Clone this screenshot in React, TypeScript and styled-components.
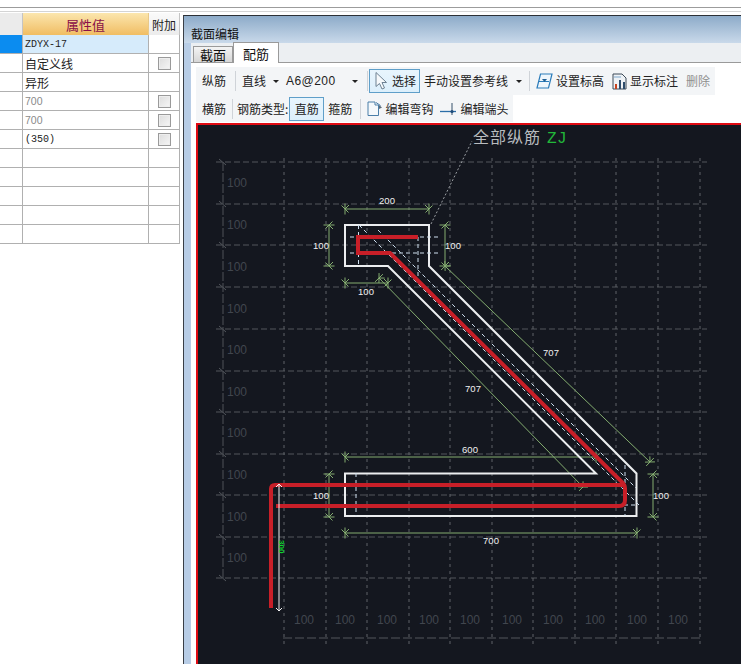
import React from "react";
import styled, { createGlobalStyle } from "styled-components";

const CJK = `"Noto Sans CJK SC", "Liberation Sans", sans-serif`;

const Global = createGlobalStyle`
  html, body { margin: 0; padding: 0; background: #fff; overflow: hidden; }
  #root { width: 741px; height: 664px; }
`;

const Page = styled.div`
  width: 741px; height: 664px; overflow: hidden; display: flex; flex-direction: column;
  background: #fff; font-family: ${CJK}; font-size: 12px; color: #222;
`;
const TopRule = styled.div`
  margin-top: 7px; height: 6px; flex: none; box-sizing: border-box;
  border-top: 1px solid #9c9c9c;
  &::after { content: ""; display: block; margin-top: 3px; height: 1px; background: #d4d4d4; }
`;
const Main = styled.div`
  flex: 1; min-height: 0; display: flex; gap: 3px;
`;
const PropTable = styled.div`
  width: 180px; flex: none; align-self: flex-start;
  display: grid; grid-template-columns: 23px 126px 31px; grid-template-rows: 22px; grid-auto-rows: 19px;
`;
const HeadCell = styled.div<{ $kind: "blank" | "main" | "extra" }>`
  box-sizing: border-box; display: flex; align-items: center; justify-content: center;
  border-right: 1px solid ${p => (p.$kind === "main" ? "#e8c98a" : "#c4c4c4")};
  background: ${p =>
    p.$kind === "main"
      ? "linear-gradient(#fbe6ae, #f0bd63)"
      : p.$kind === "extra"
      ? "linear-gradient(#fafafa, #ececec)"
      : "#ebebeb"};
  color: ${p => (p.$kind === "main" ? "#8a1048" : "#222")};
  font-size: ${p => (p.$kind === "main" ? "13px" : "12px")};
`;
const Cell = styled.div<{ $bg?: string; $tone?: "mono" | "muted" | "plain" }>`
  box-sizing: border-box; height: 19px; display: flex; align-items: center; justify-content: flex-start;
  padding-left: 2px; overflow: hidden; white-space: nowrap;
  border-right: 1px solid #b0b0b0; border-bottom: 1px solid #b0b0b0;
  background: ${p => p.$bg ?? "#fff"};
  color: ${p => (p.$tone === "muted" ? "#8a8a8a" : "#222")};
  font-family: ${p => (p.$tone === "mono" ? `"Liberation Mono", monospace` : p.$tone === "muted" ? `"Liberation Sans", sans-serif` : CJK)};
  font-size: ${p => (p.$tone === "mono" ? "10px" : p.$tone === "muted" ? "10.500px" : "12px")};
`;
const CheckCell = styled(Cell)`
  justify-content: center; padding-left: 0;
`;
const Check = styled.span`
  width: 13px; height: 13px; box-sizing: border-box; display: block;
  border: 1px solid #9a9a9a; background: linear-gradient(135deg, #dcdcdc, #f6f6f6);
  box-shadow: inset 0 0 0 1px #eee;
`;
const Panel = styled.div`
  flex: 1; min-width: 0; margin-top: 2px; display: flex; flex-direction: column;
  border-left: 1px solid #3a3f46; border-top: 1px solid #2c3036;
  background: #b8cde6; overflow: hidden;
`;
const TitleBar = styled.div`
  height: 27px; flex: none; box-sizing: border-box; padding: 9px 0 0 7px; line-height: 17px; color: #111;
  background: linear-gradient(#8dabc9, #c9d9ea);
`;
const PanelBody = styled.div`
  flex: 1; min-height: 0; margin-left: 7px; display: flex; flex-direction: column; background: #fff;
`;
const TabStrip = styled.div`
  height: 20px; flex: none; box-sizing: border-box; display: flex; align-items: flex-end; padding-left: 2px;
  background: #eceff2; border-bottom: 1px solid #9a9a9a;
`;
const Tab = styled.div<{ $active?: boolean }>`
  box-sizing: border-box; display: flex; justify-content: center; align-items: center;
  width: ${p => (p.$active ? "46px" : "40px")};
  height: ${p => (p.$active ? "21px" : "17px")};
  margin-bottom: -1px;
  border: 1px solid #9a9a9a; border-bottom: ${p => (p.$active ? "none" : "1px solid #9a9a9a")};
  background: ${p => (p.$active ? "#fff" : "linear-gradient(#f4f4f4, #d6d6d6)")};
  font-size: 13px; color: #111;
`;
const Content = styled.div`
  flex: 1; min-height: 0; display: flex; flex-direction: column; padding: 4px 0 0 5px;
  background: #fff;
`;
const Toolbar = styled.div<{ $h: number }>`
  height: ${p => p.$h}px; flex: none; align-self: flex-start; display: flex; align-items: center;
  padding: 0 5px 0 6px; background: #f3f5f7; white-space: nowrap;
`;
const Label = styled.span<{ $ml?: number; $muted?: boolean }>`
  margin-left: ${p => p.$ml ?? 0}px; color: ${p => (p.$muted ? "#8f8f8f" : "#222")}; line-height: 16px;
`;
const Combo = styled.span<{ $ml: number }>`
  margin-left: ${p => p.$ml}px; width: 49px; font-family: "Liberation Sans", sans-serif; letter-spacing: 0.45px; color: #222;
`;
const Caret = styled.span<{ $ml: number }>`
  margin-left: ${p => p.$ml}px; width: 0; height: 0;
  border-left: 3px solid transparent; border-right: 3px solid transparent; border-top: 3px solid #222;
`;
const Sep = styled.span<{ $ml: number }>`
  margin-left: ${p => p.$ml}px; width: 1px; height: 20px; background: #cfd3d8;
`;
const ToolButton = styled.div<{ $ml: number; $w: number }>`
  margin-left: ${p => p.$ml}px; width: ${p => p.$w}px; height: 24px; box-sizing: border-box; flex: none;
  display: flex; align-items: center; justify-content: center; gap: 3px;
  border: 1px solid #5f9fc9; background: linear-gradient(#e8f5fd, #dceffb);
`;
const IconSlot = styled.svg<{ $ml: number }>`
  margin-left: ${p => p.$ml}px; flex: none; display: block;
`;
const Canvas = styled.div`
  flex: 1; min-height: 0; margin-top: 1px; border: solid #e00a12; border-width: 2px 0 0 2px; background: #14171f;
  overflow: hidden;
`;
const Drawing = styled.svg`
  display: block; width: 543px; height: 539px;
`;
const GridLabel = styled.text`
  font-family: "Liberation Sans", sans-serif; font-size: 12px; fill: #41464e; text-anchor: middle;
`;
const DimText = styled.text`
  font-family: "Liberation Sans", sans-serif; font-size: 9.500px; fill: #f0f0f0; text-anchor: middle;
`;
const NoteText = styled.text`
  font-family: ${CJK}; font-size: 16px; fill: #b9bcbf; letter-spacing: 1px;
`;
const NoteCode = styled.text`
  font-family: "Liberation Mono", monospace; font-size: 16px; fill: #22b83a; letter-spacing: 0.500px;
`;
const HeightText = styled.text`
  font-family: "Liberation Sans", sans-serif; font-size: 8px; font-weight: bold; fill: #0fd02c;
`;

const rows: { v: string; tone?: "mono" | "muted" | "plain"; check?: boolean; sel?: boolean }[] = [
  { v: "ZDYX-17", tone: "mono", sel: true },
  { v: "自定义线", check: true },
  { v: "异形" },
  { v: "700", tone: "muted", check: true },
  { v: "700", tone: "muted", check: true },
  { v: "(350)", tone: "mono", check: true },
  { v: "" }, { v: "" }, { v: "" }, { v: "" }, { v: "" },
];

const xs = [284, 326, 367, 409, 450, 492, 533, 575, 616, 658, 700];
const ys = [162, 204, 245, 287, 329, 371, 412, 454, 495, 537, 578];
const leftLabels = [183, 225, 267, 309, 350, 392, 433, 475, 517, 558];
const bottomLabels = [304, 345, 387, 429, 470, 512, 553, 595, 637, 678];

const GREEN = "#84ad70";

function Dim({ x1, y1, x2, y2 }: { x1: number; y1: number; x2: number; y2: number }) {
  const len = Math.hypot(x2 - x1, y2 - y1);
  const dx = (x2 - x1) / len, dy = (y2 - y1) / len;
  const end = (px: number, py: number, s: number) => {
    const ax = dx * s, ay = dy * s, nx = -dy, ny = dx;
    return `M${px + nx * 5.5} ${py + ny * 5.5}L${px - nx * 5.5} ${py - ny * 5.5}` +
      `M${px + (ax + nx) * 3.5} ${py + (ay + ny) * 3.5}L${px - (ax + nx) * 3.5} ${py - (ay + ny) * 3.5}` +
      `M${px} ${py}L${px + (ax - nx) * 4} ${py + (ay - ny) * 4}`;
  };
  return (
    <path
      d={`M${x1} ${y1}L${x2} ${y2}${end(x1, y1, 1)}${end(x2, y2, -1)}`}
      stroke={GREEN} strokeWidth={1} fill="none"
    />
  );
}

const dims = [
  [345, 209, 429, 209], [329, 225, 329, 266], [445, 225, 445, 266], [345, 283, 388, 283],
  [445, 266, 650, 462], [379, 278, 583, 487], [345, 457, 596, 457], [345, 533, 637, 533],
  [653, 474, 653, 517], [329, 474, 329, 517],
];
const dimTexts: [number, number, string][] = [
  [387, 204, "200"], [321, 249, "100"], [453, 249, "100"], [366, 295, "100"],
  [551, 356, "707"], [473, 392, "707"], [470, 453, "600"], [491, 544, "700"],
  [661, 499, "100"], [321, 499, "100"],
];

const OUTLINE = "M345 225H429V266L636.5 473.5V516H345V473.5H596L388 266H345Z";
const HIDDEN = [
  "M350 237H440", "M350 253H440", "M358.5 225V266", "M418 237V285",
  "M359 225L640 506", "M378 230L636 488",
  "M345 505H392", "M356 473V516", "M625 465V516", "M610 505H637",
];
const BAR = "M418 237H358V253H390L623 483Q625.500 486 625 490V500Q625 506 619 506H276M625 485H275Q271 485 271 489V608";

export default function App() {
  return (
    <Page>
      <Global />
      <TopRule />
      <Main>
        <PropTable>
          <HeadCell $kind="blank" />
          <HeadCell $kind="main">属性值</HeadCell>
          <HeadCell $kind="extra">附加</HeadCell>
          {rows.map((r, i) => (
            <React.Fragment key={i}>
              <Cell $bg={r.sel ? "#0b8cf0" : "#fff"} />
              <Cell $bg={r.sel ? "#d6ebfb" : "#fff"} $tone={r.tone}>{r.v}</Cell>
              <CheckCell>{r.check && <Check />}</CheckCell>
            </React.Fragment>
          ))}
        </PropTable>
        <Panel>
          <TitleBar>截面编辑</TitleBar>
          <PanelBody>
            <TabStrip>
              <Tab>截面</Tab>
              <Tab $active>配筋</Tab>
            </TabStrip>
            <Content>
              <Toolbar $h={28}>
                <Label>纵筋</Label>
                <Sep $ml={9} />
                <Label $ml={6}>直线</Label>
                <Caret $ml={7} />
                <Combo $ml={7}>A6@200</Combo>
                <Caret $ml={17} />
                <Sep $ml={9} />
                <ToolButton $ml={1} $w={51}>
                  <svg width="16" height="20" viewBox="0 0 16 20">
                    <path d="M3 1.500V15.500L6.500 12.500L9 18L11.500 17L9 11.500H13.500Z" fill="#f6f9fb" stroke="#6d8192" strokeWidth="1" />
                  </svg>
                  <Label>选择</Label>
                </ToolButton>
                <Label $ml={4}>手动设置参考线</Label>
                <Caret $ml={8} />
                <Sep $ml={7} />
                <IconSlot $ml={6} width="17" height="16" viewBox="0 0 17 16">
                  <path d="M4.500 1H16L12.500 15H1Z" fill="#eef6fc" stroke="#2b7cba" strokeWidth="1.200" />
                  <path d="M3 8.500H13" stroke="#2b7cba" />
                  <path d="M6 6H11L8.500 9Z" fill="#1f5f94" />
                </IconSlot>
                <Label $ml={3}>设置标高</Label>
                <IconSlot $ml={8} width="15" height="17" viewBox="0 0 15 17">
                  <path d="M1 1H10L14 5V16H1Z" fill="#eef2f6" stroke="#3c4a58" />
                  <path d="M3 16V11H5V16Z" fill="#c8431f" />
                  <path d="M7 16V7H9V16ZM11 16V9H13V16Z" fill="#2e4c6b" />
                  <path d="M2 4H9" stroke="#7da7cb" />
                </IconSlot>
                <Label $ml={3}>显示标注</Label>
                <Label $ml={8} $muted>删除</Label>
              </Toolbar>
              <Toolbar $h={27}>
                <Label>横筋</Label>
                <Sep $ml={6} />
                <Label $ml={4}>钢筋类型:</Label>
                <ToolButton $ml={1} $w={35}>
                  <Label>直筋</Label>
                </ToolButton>
                <Label $ml={4}>箍筋</Label>
                <Sep $ml={8} />
                <IconSlot $ml={6} width="15" height="16" viewBox="0 0 15 16">
                  <path d="M1 1H8V4H11.500V14.500H1Z" fill="#f4f8fb" stroke="#4a7ea8" />
                  <path d="M9 1.500L13.500 4.500" stroke="#4a7ea8" />
                  <path d="M12 4L15 6.500L12 8Z" fill="#5a6a78" />
                </IconSlot>
                <Label $ml={3}>编辑弯钩</Label>
                <IconSlot $ml={7} width="16" height="16" viewBox="0 0 16 16">
                  <path d="M0 10.500H16" stroke="#2b6ea8" strokeWidth="1.300" />
                  <path d="M12 2V14" stroke="#35506b" />
                  <circle cx="12" cy="10.500" r="1.600" fill="#1c4a78" />
                </IconSlot>
                <Label $ml={4}>编辑端头</Label>
              </Toolbar>
              <Canvas>
                <Drawing viewBox="198 125 543 539">
                  {ys.map(y => (
                    <path key={y} d={`M216 ${y}H707`} stroke="#52565c" strokeDasharray="6 3" fill="none" />
                  ))}
                  <path d="M283 638H700" stroke="#52565c" strokeDasharray="9 3" fill="none" />
                  <path d="M223 162V578" stroke="#4e5258" strokeDasharray="9 2" fill="none" />
                  {xs.map(x => (
                    <path key={x} d={`M${x} 158V646`} stroke="#5e6268" strokeDasharray="3 4" fill="none" />
                  ))}
                  {ys.map(y => (
                    <path key={y} d={`M219 ${y - 3}L226 ${y + 3}`} stroke="#52565c" fill="none" />
                  ))}
                  {leftLabels.map(y => (
                    <GridLabel key={y} x={237} y={y + 4}>100</GridLabel>
                  ))}
                  {bottomLabels.map(x => (
                    <GridLabel key={x} x={x} y={624}>100</GridLabel>
                  ))}
                  <path d="M431 224L472 141" stroke="#9a9ea2" strokeDasharray="2 2" fill="none" />
                  <NoteText x={473} y={143}>全部纵筋</NoteText>
                  <NoteCode x={547} y={143}>ZJ</NoteCode>
                  {dims.map((d, i) => (
                    <Dim key={i} x1={d[0]} y1={d[1]} x2={d[2]} y2={d[3]} />
                  ))}
                  {dimTexts.map(([x, y, t], i) => (
                    <DimText key={i} x={x} y={y}>{t}</DimText>
                  ))}
                  <path d={OUTLINE} fill="none" stroke="#eceef0" strokeWidth="2" />
                  {HIDDEN.map((d, i) => (
                    <path key={i} d={d} fill="none" stroke="#cfe0f0" strokeDasharray="4 3" />
                  ))}
                  <path d={BAR} fill="none" stroke="#c81f28" strokeWidth="4" />
                  <path d="M279 485V610M276 487L279 484L282 487M276 608L279 611L282 608" fill="none" stroke="#f2f2f2" />
                  <HeightText x={279} y={540} transform="rotate(90 279 540)">300</HeightText>
                </Drawing>
              </Canvas>
            </Content>
          </PanelBody>
        </Panel>
      </Main>
    </Page>
  );
}
